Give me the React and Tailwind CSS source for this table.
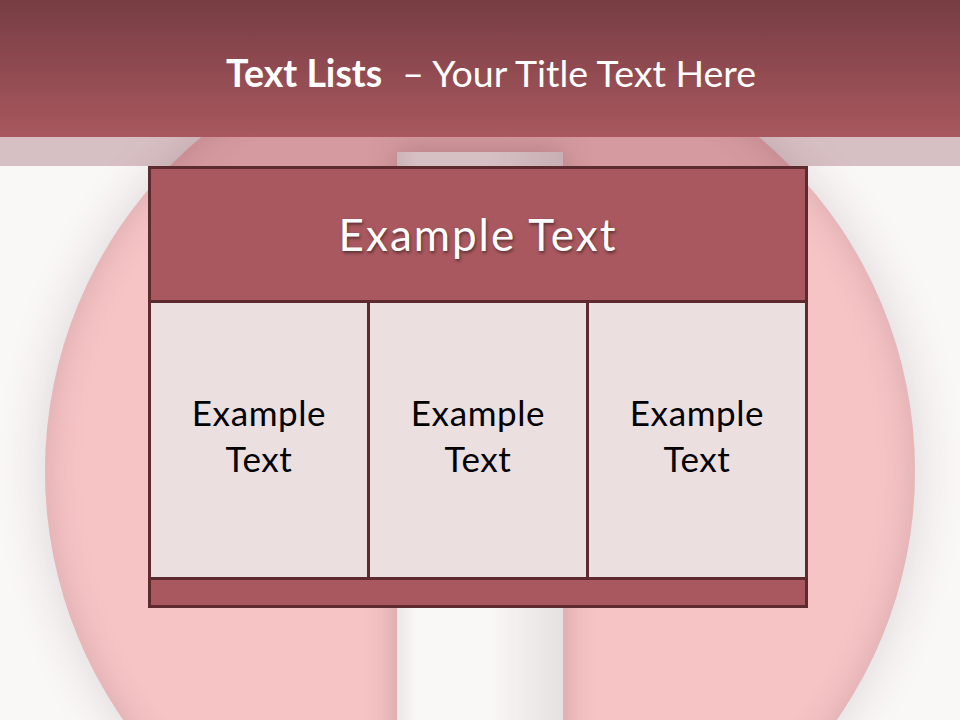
const cells = ["Example", "Example", "Example"];

export default function App() {
  return (
    <div className="relative w-[960px] h-[720px] overflow-hidden bg-[#faf7f7] font-['Lato','Open_Sans',sans-serif]">
      {/* backdrop: big disc with a white slot down the middle */}
      <div className="absolute left-[45px] top-[36px] w-[870px] h-[870px] rounded-full bg-[#f6c4c5] shadow-[0_0_50px_rgba(60,40,45,0.16),inset_0_0_35px_rgba(110,70,80,0.22)]" />
      <div className="absolute left-[397px] top-[152px] w-[166px] h-[600px] bg-[linear-gradient(90deg,#ece6e7_0%,#faf7f7_12%,#faf7f7_55%,#e5e1e1_100%)] shadow-[0_0_28px_rgba(80,50,55,0.28)]" />

      <div className="relative z-10 flex flex-col">
        <header className="h-[137px] bg-[linear-gradient(180deg,#763d43_0%,#a8585e_100%)] flex items-center justify-center pl-[22px] pt-[8px] text-white text-[37.5px] leading-none">
          <span className="font-bold">Text Lists</span>
          <span className="ml-[20px]">– Your Title Text Here</span>
        </header>
        <div className="h-[29px] bg-[rgba(114,35,50,0.26)]" />

        <div className="ml-[148px] w-[660px] h-[442px] border-[3px] border-[#5c2a2f] flex flex-col">
          <div className="h-[129px] pb-[2px] bg-[#a8585e] border-b-[3px] border-[#5c2a2f] box-content flex items-center justify-center text-white text-[44px] tracking-[2px] [text-shadow:1px_2px_3px_rgba(0,0,0,0.45)]">
            Example Text
          </div>
          <div className="h-[274px] box-content border-b-[3px] border-[#5c2a2f] flex bg-[#ecdfe0]">
            {cells.map((c, i) => (
              <div
                key={i}
                className={
                  "flex flex-col items-center justify-center text-black text-[35px] tracking-[0.6px] leading-[46px] pb-[10px] " +
                  (i < 2 ? "w-[219px] border-r-[3px] border-[#5c2a2f]" : "w-[216px]")
                }
              >
                <span>{c}</span>
                <span>Text</span>
              </div>
            ))}
          </div>
          <div className="flex-1 bg-[#a8585e]" />
        </div>
      </div>
    </div>
  );
}
